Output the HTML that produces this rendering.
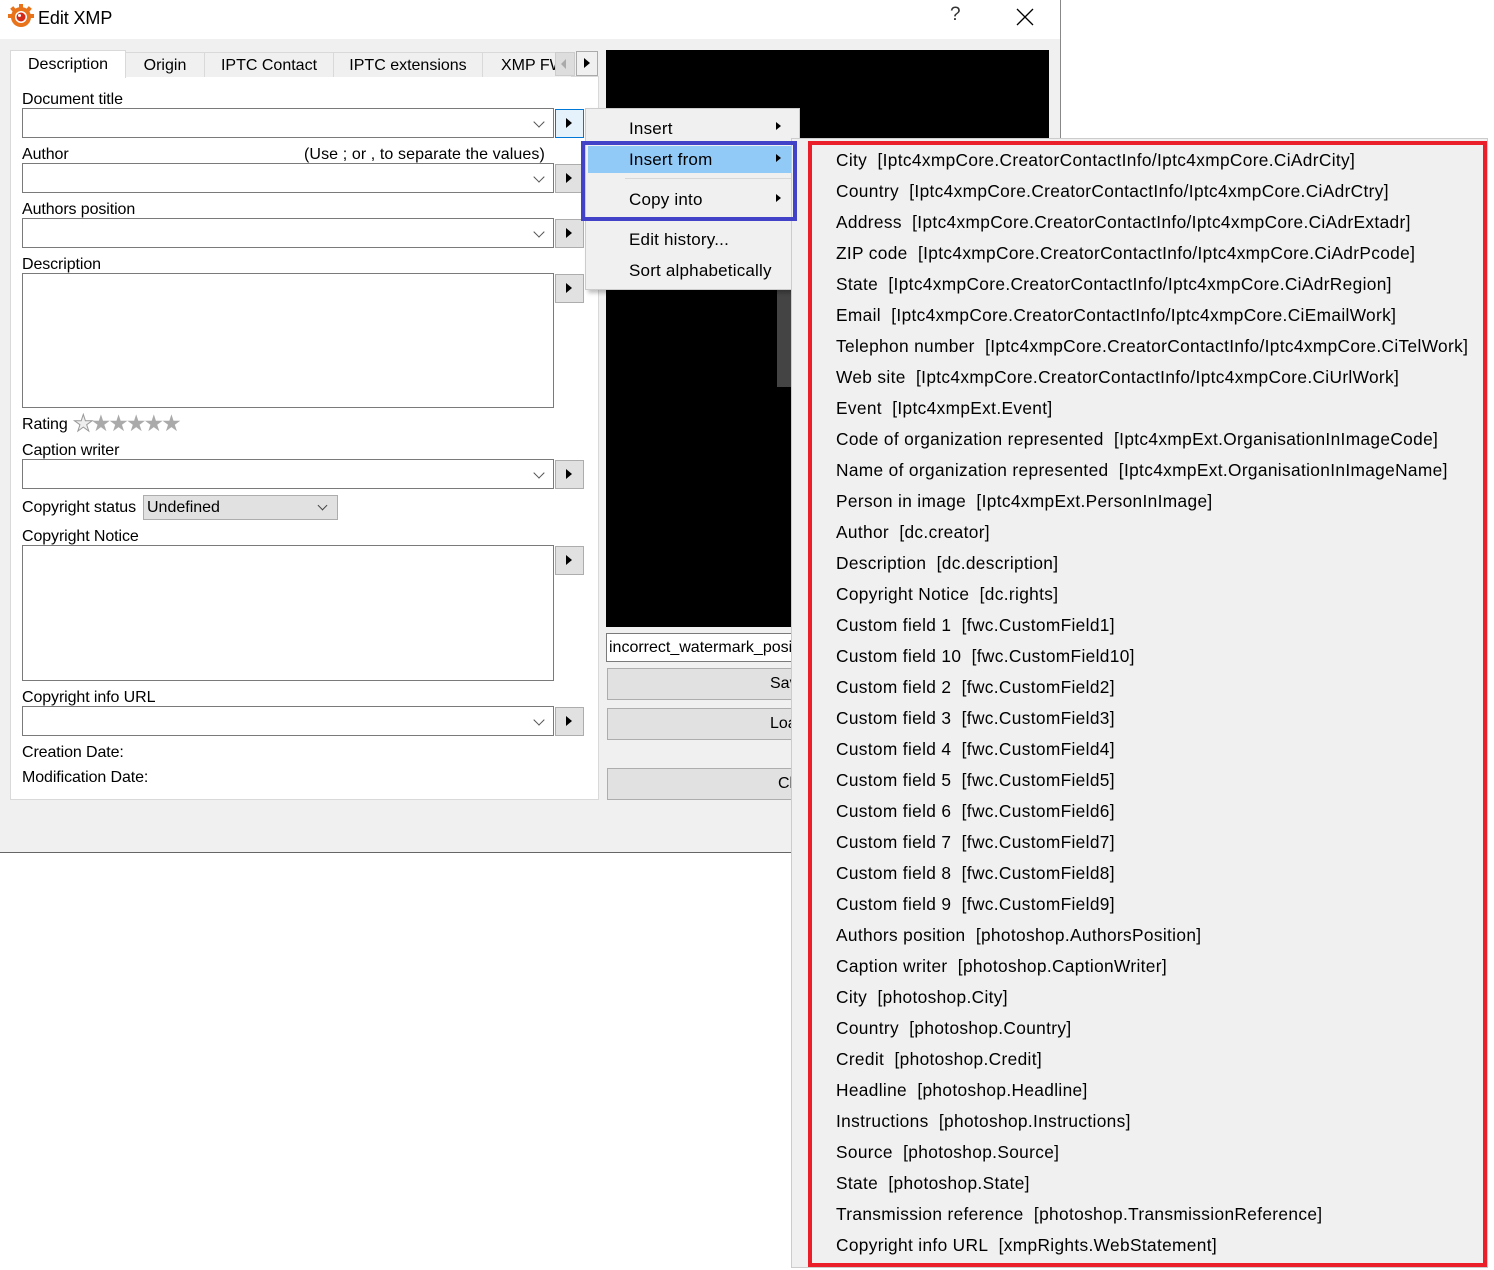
<!DOCTYPE html>
<html><head><meta charset="utf-8"><style>
*{margin:0;padding:0;box-sizing:border-box}
body{width:1494px;height:1270px;background:#fff;position:relative;overflow:hidden;font-family:"Liberation Sans",sans-serif;color:#000}
.a{position:absolute}
.lbl{position:absolute;font-size:16px;line-height:18px;white-space:nowrap;letter-spacing:-0.1px}
.cb{position:absolute;left:22px;width:532px;height:30px;background:#fff;border:1px solid #7a7a7a}
.cb:after{content:"";position:absolute;right:10px;top:9px;width:7px;height:7px;border-right:1px solid #555;border-bottom:1px solid #555;transform:rotate(45deg)}
.ta{position:absolute;left:22px;width:532px;background:#fff;border:1px solid #7a7a7a}
.btn{position:absolute;left:555px;width:29px;height:29px;background:#e1e1e1;border:1px solid #adadad}
.btn:after{content:"";position:absolute;left:10px;top:8px;border-left:6px solid #000;border-top:5px solid transparent;border-bottom:5px solid transparent}
.mi{position:absolute;left:629px;font-size:17px;line-height:20px;white-space:nowrap;letter-spacing:0.2px}
.ar{position:absolute;left:776px;border-left:5px solid #000;border-top:4.5px solid transparent;border-bottom:4.5px solid transparent}
.si{position:absolute;left:836px;font-size:17.3px;line-height:20px;white-space:nowrap;letter-spacing:0.35px}
.pb{position:absolute;left:607px;width:200px;height:32px;background:#e1e1e1;border:1px solid #adadad;font-size:16px;line-height:30px}
.tab{position:absolute;top:52px;height:25px;border:1px solid #d9d9d9;border-bottom:none;background:#f0f0f0;font-size:16px;line-height:26px;text-align:center}
</style></head><body>
<div class="a" style="left:0;top:0;width:1061px;height:853px;background:#f0f0f0;border-right:1px solid #888;border-bottom:1px solid #666"></div>
<div class="a" style="left:0;top:0;width:1060px;height:39px;background:#fff"></div>
<svg class="a" style="left:8px;top:3px" width="26" height="26" viewBox="0 0 26 26">
<g fill="#e8731a"><circle cx="13" cy="14" r="10"/><rect x="11" y="1" width="4" height="6"/><rect x="3" y="4" width="4" height="5" transform="rotate(-40 5 6)"/><rect x="19" y="4" width="4" height="5" transform="rotate(40 21 6)"/><rect x="0" y="11" width="5" height="4"/><rect x="21" y="11" width="5" height="4"/></g>
<circle cx="13" cy="14" r="6" fill="#fff"/><circle cx="13" cy="14" r="4.5" fill="#d42a1a"/><circle cx="11.5" cy="12.5" r="1.5" fill="#fff"/></svg>
<div class="lbl" style="left:38px;top:8px;font-size:18px;line-height:20px">Edit XMP</div>
<div class="lbl" style="left:950px;top:6px;font-size:19px;color:#333">?</div>
<svg class="a" style="left:1016px;top:8px" width="18" height="18"><path d="M1 1L17 17M17 1L1 17" stroke="#000" stroke-width="1.3"/></svg>

<div class="a" style="left:10px;top:76px;width:589px;height:724px;background:#fff;border:1px solid #d9d9d9"></div>
<div class="tab" style="left:125px;width:80px">Origin</div>
<div class="tab" style="left:204px;width:130px">IPTC Contact</div>
<div class="tab" style="left:333px;width:150px">IPTC extensions</div>
<div class="tab" style="left:482px;width:90px;text-align:left;padding-left:18px;overflow:hidden">XMP FW</div>
<div class="a" style="left:10px;top:50px;width:116px;height:28px;background:#fff;border:1px solid #d9d9d9;border-bottom:none;font-size:16px;line-height:27px;text-align:center">Description</div>
<div class="a" style="left:555px;top:52px;width:20px;height:24px;background:#ddd;border:1px solid #ccc"><div class="a" style="left:5px;top:6px;border-right:5px solid #aaa;border-top:5px solid transparent;border-bottom:5px solid transparent"></div></div>
<div class="a" style="left:576px;top:51px;width:22px;height:25px;background:#f0f0f0;border:1px solid #aaa"><div class="a" style="left:7px;top:6px;border-left:6px solid #000;border-top:5px solid transparent;border-bottom:5px solid transparent"></div></div>

<div class="lbl" style="left:22px;top:91px">Document title</div>
<div class="cb" style="top:108px"></div>
<div class="btn" style="top:109px;background:#e5f1fb;border-color:#0078d7"></div>
<div class="lbl" style="left:22px;top:146px">Author</div>
<div class="lbl" style="left:304px;top:146px;letter-spacing:0.1px">(Use ; or , to separate the values)</div>
<div class="cb" style="top:163px"></div>
<div class="btn" style="top:164px"></div>
<div class="lbl" style="left:22px;top:201px">Authors position</div>
<div class="cb" style="top:218px"></div>
<div class="btn" style="top:219px"></div>
<div class="lbl" style="left:22px;top:256px">Description</div>
<div class="ta" style="top:273px;height:135px"></div>
<div class="btn" style="top:274px"></div>
<div class="lbl" style="left:22px;top:416px">Rating</div>
<div class="a" style="left:73px;top:410px;font-size:23px;line-height:26px;color:#aaa;letter-spacing:-3px;white-space:nowrap"><span style="color:#eee;-webkit-text-stroke:1px #999">★</span>★★★★★</div>
<div class="lbl" style="left:22px;top:442px">Caption writer</div>
<div class="cb" style="top:459px"></div>
<div class="btn" style="top:460px"></div>
<div class="lbl" style="left:22px;top:499px">Copyright status</div>
<div class="a" style="left:143px;top:495px;width:195px;height:25px;background:#e1e1e1;border:1px solid #adadad;font-size:16px;line-height:23px;padding-left:3px">Undefined<div class="a" style="right:11px;top:6px;width:7px;height:7px;border-right:1px solid #444;border-bottom:1px solid #444;transform:rotate(45deg)"></div></div>
<div class="lbl" style="left:22px;top:528px">Copyright Notice</div>
<div class="ta" style="top:545px;height:136px"></div>
<div class="btn" style="top:546px"></div>
<div class="lbl" style="left:22px;top:689px">Copyright info URL</div>
<div class="cb" style="top:706px"></div>
<div class="btn" style="top:707px"></div>
<div class="lbl" style="left:22px;top:744px">Creation Date:</div>
<div class="lbl" style="left:22px;top:769px">Modification Date:</div>

<div class="a" style="left:606px;top:50px;width:443px;height:577px;background:#000"></div>
<div class="a" style="left:777px;top:290px;width:16px;height:97px;background:#444"></div>
<div class="a" style="left:606px;top:633px;width:200px;height:29px;background:#fff;border:1px solid #7a7a7a;font-size:16px;line-height:27px;padding-left:2px;white-space:nowrap;overflow:hidden">incorrect_watermark_position</div>
<div class="pb" style="top:668px;padding-left:162px">Save</div>
<div class="pb" style="top:708px;padding-left:162px">Load</div>
<div class="pb" style="top:768px;padding-left:170px">Close</div>

<div class="a" style="left:585px;top:108px;width:215px;height:182px;background:#f0f0f0;border:1px solid #ccc;box-shadow:3px 3px 4px rgba(0,0,0,0.25)"></div>
<div class="mi" style="top:119px">Insert</div><div class="ar" style="top:122px"></div>
<div class="a" style="left:588px;top:146px;width:203px;height:27px;background:#91c9f7"></div>
<div class="mi" style="top:150px">Insert from</div><div class="ar" style="top:154px"></div>
<div class="a" style="left:625px;top:178px;width:166px;height:1px;background:#d7d7d7"></div>
<div class="mi" style="top:190px">Copy into</div><div class="ar" style="top:194px"></div>
<div class="mi" style="top:230px">Edit history...</div>
<div class="mi" style="top:261px">Sort alphabetically</div>

<div class="a" style="left:791px;top:138px;width:697px;height:1130px;background:#f0f0f0;border:1px solid #ccc"></div>
<div class="a" style="left:581px;top:141px;width:216px;height:80px;border:4px solid #4242c8;z-index:2"></div>
<div class="a" style="left:808px;top:141px;width:679px;height:1126px;border:4px solid #ea1f29;z-index:3"></div>
<div class="si" style="top:150px">City&nbsp; [Iptc4xmpCore.CreatorContactInfo/Iptc4xmpCore.CiAdrCity]</div>
<div class="si" style="top:181px">Country&nbsp; [Iptc4xmpCore.CreatorContactInfo/Iptc4xmpCore.CiAdrCtry]</div>
<div class="si" style="top:212px">Address&nbsp; [Iptc4xmpCore.CreatorContactInfo/Iptc4xmpCore.CiAdrExtadr]</div>
<div class="si" style="top:243px">ZIP code&nbsp; [Iptc4xmpCore.CreatorContactInfo/Iptc4xmpCore.CiAdrPcode]</div>
<div class="si" style="top:274px">State&nbsp; [Iptc4xmpCore.CreatorContactInfo/Iptc4xmpCore.CiAdrRegion]</div>
<div class="si" style="top:305px">Email&nbsp; [Iptc4xmpCore.CreatorContactInfo/Iptc4xmpCore.CiEmailWork]</div>
<div class="si" style="top:336px">Telephon number&nbsp; [Iptc4xmpCore.CreatorContactInfo/Iptc4xmpCore.CiTelWork]</div>
<div class="si" style="top:367px">Web site&nbsp; [Iptc4xmpCore.CreatorContactInfo/Iptc4xmpCore.CiUrlWork]</div>
<div class="si" style="top:398px">Event&nbsp; [Iptc4xmpExt.Event]</div>
<div class="si" style="top:429px">Code of organization represented&nbsp; [Iptc4xmpExt.OrganisationInImageCode]</div>
<div class="si" style="top:460px">Name of organization represented&nbsp; [Iptc4xmpExt.OrganisationInImageName]</div>
<div class="si" style="top:491px">Person in image&nbsp; [Iptc4xmpExt.PersonInImage]</div>
<div class="si" style="top:522px">Author&nbsp; [dc.creator]</div>
<div class="si" style="top:553px">Description&nbsp; [dc.description]</div>
<div class="si" style="top:584px">Copyright Notice&nbsp; [dc.rights]</div>
<div class="si" style="top:615px">Custom field 1&nbsp; [fwc.CustomField1]</div>
<div class="si" style="top:646px">Custom field 10&nbsp; [fwc.CustomField10]</div>
<div class="si" style="top:677px">Custom field 2&nbsp; [fwc.CustomField2]</div>
<div class="si" style="top:708px">Custom field 3&nbsp; [fwc.CustomField3]</div>
<div class="si" style="top:739px">Custom field 4&nbsp; [fwc.CustomField4]</div>
<div class="si" style="top:770px">Custom field 5&nbsp; [fwc.CustomField5]</div>
<div class="si" style="top:801px">Custom field 6&nbsp; [fwc.CustomField6]</div>
<div class="si" style="top:832px">Custom field 7&nbsp; [fwc.CustomField7]</div>
<div class="si" style="top:863px">Custom field 8&nbsp; [fwc.CustomField8]</div>
<div class="si" style="top:894px">Custom field 9&nbsp; [fwc.CustomField9]</div>
<div class="si" style="top:925px">Authors position&nbsp; [photoshop.AuthorsPosition]</div>
<div class="si" style="top:956px">Caption writer&nbsp; [photoshop.CaptionWriter]</div>
<div class="si" style="top:987px">City&nbsp; [photoshop.City]</div>
<div class="si" style="top:1018px">Country&nbsp; [photoshop.Country]</div>
<div class="si" style="top:1049px">Credit&nbsp; [photoshop.Credit]</div>
<div class="si" style="top:1080px">Headline&nbsp; [photoshop.Headline]</div>
<div class="si" style="top:1111px">Instructions&nbsp; [photoshop.Instructions]</div>
<div class="si" style="top:1142px">Source&nbsp; [photoshop.Source]</div>
<div class="si" style="top:1173px">State&nbsp; [photoshop.State]</div>
<div class="si" style="top:1204px">Transmission reference&nbsp; [photoshop.TransmissionReference]</div>
<div class="si" style="top:1235px">Copyright info URL&nbsp; [xmpRights.WebStatement]</div>
</body></html>
